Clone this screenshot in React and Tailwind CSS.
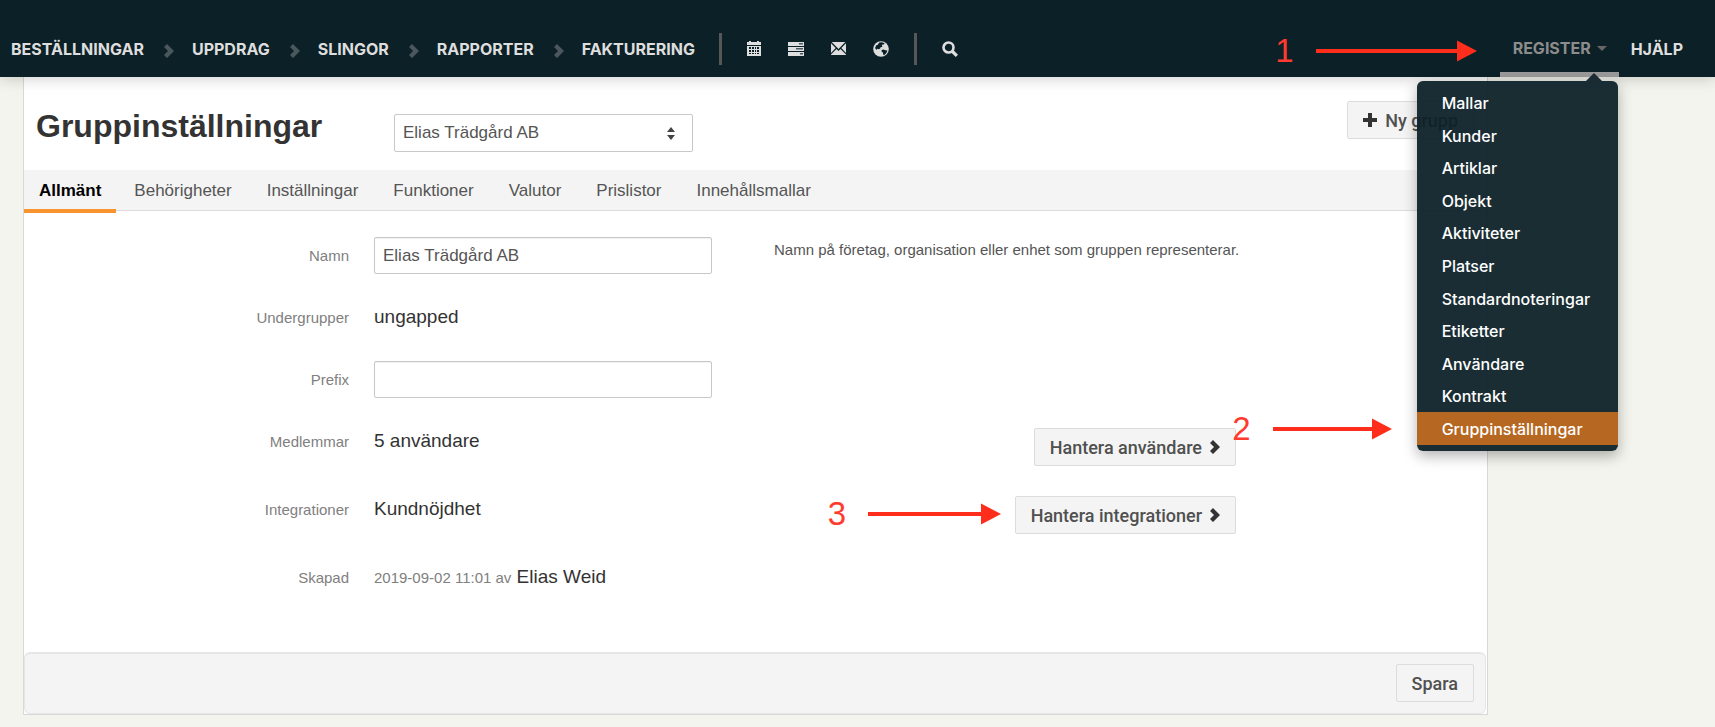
import { Fragment, useState } from 'react';

const NAV_ITEMS = ['BESTÄLLNINGAR', 'UPPDRAG', 'SLINGOR', 'RAPPORTER', 'FAKTURERING'];

const REGISTER_ITEMS = [
  'Mallar',
  'Kunder',
  'Artiklar',
  'Objekt',
  'Aktiviteter',
  'Platser',
  'Standardnoteringar',
  'Etiketter',
  'Användare',
  'Kontrakt',
  'Gruppinställningar',
];

const TABS = ['Allmänt', 'Behörigheter', 'Inställningar', 'Funktioner', 'Valutor', 'Prislistor', 'Innehållsmallar'];

function ChevronIcon({ className }) {
  return (
    <svg viewBox="0 0 10 14" className={className} fill="currentColor" aria-hidden="true">
      <path d="M0 3 3 0l7 7-7 7-3-3 4-4z" />
    </svg>
  );
}

function PlusIcon() {
  return (
    <svg viewBox="0 0 14 14" className="size-[14px]" fill="#333" aria-hidden="true">
      <path d="M5 0h4v5h5v4H9v5H5V9H0V5h5z" />
    </svg>
  );
}

function CalendarIcon() {
  return (
    <svg viewBox="0 0 14 15" className="h-[15px] w-[14px]" fill="currentColor" aria-hidden="true">
      <path d="M0 1h2V0h2v1h6V0h2v1h2v3H0z" />
      <path
        fillRule="evenodd"
        d="M0 5h14v10H0zM2 6v2h2V6zm3 0v2h2V6zm3 0v2h1V6zm2 0v2h2V6zM2 9v2h2V9zm3 0v2h2V9zm3 0v2h1V9zm2 0v2h2V9zM2 12v1h2v-1zm3 0v1h2v-1zm3 0v1h1v-1zm2 0v1h2v-1z"
      />
    </svg>
  );
}

function TasksIcon() {
  return (
    <svg viewBox="0 0 16 14" className="h-[14px] w-[16px]" aria-hidden="true">
      <g fill="currentColor">
        <rect width="16" height="4" />
        <rect y="5" width="16" height="4" />
        <rect y="10" width="16" height="4" />
      </g>
      <g fill="#4b5a60">
        <rect x="11" y="1" width="4" height="1.5" />
        <rect x="8" y="6" width="7" height="1.5" />
        <rect x="12" y="11" width="3" height="1.5" />
      </g>
    </svg>
  );
}

function EnvelopeIcon() {
  return (
    <svg viewBox="0 0 15 13" className="h-[13px] w-[15px]" fill="currentColor" aria-hidden="true">
      <path d="M.7 0h13.6L7.5 7zM0 1.2 4.7 6 0 11zM15 1.2 10.3 6 15 11zM5.5 6.9l2 2 2-2L15 12.4v.6H0v-.6z" />
    </svg>
  );
}

function GlobeIcon() {
  return (
    <svg viewBox="0 0 16 16" className="size-[16px]" aria-hidden="true">
      <circle cx="8" cy="8" r="7.8" fill="currentColor" />
      <path
        fill="#0c2027"
        d="M6.2 1.6 9 1.2l2.6 1-.6 1.2-1.6.2-.6 1.2.8 1-2 .4-.4 1.4-1.6.6-1.4-.4-1 1.2-1-2 .8-2.4 1.8-.8zM8.6 9l2-.6 1.8.8 2 .2-1 2.6-2 2-1.2-.2-.2-2-1.4-1.2z"
      />
    </svg>
  );
}

function SearchIcon() {
  return (
    <svg viewBox="0 0 16 16" className="size-[16px]" fill="none" stroke="currentColor" aria-hidden="true">
      <circle cx="6.5" cy="6.5" r="5" strokeWidth="2.6" />
      <path d="m10.5 10.5 4.4 4.4" strokeWidth="3.2" />
    </svg>
  );
}

// Röd siffra med pil som visar i vilken ordning man klickar.
function Step({ number, length, className }) {
  return (
    <div className={`pointer-events-none absolute flex items-center gap-[22px] text-[#ff3b30] ${className}`}>
      <span className="font-['Liberation_Sans',sans-serif] text-[33px] leading-9 font-normal">{number}</span>
      <svg width={length} height="22" viewBox={`0 0 ${length} 22`} fill="#ff2d1c" aria-hidden="true">
        <path d={`M0 9H${length - 20}V0.5L${length} 11L${length - 20} 21.5V13H0z`} />
      </svg>
    </div>
  );
}

function Button({ children, className = '' }) {
  return (
    <button
      type="button"
      className={`flex h-[38px] items-center gap-2 rounded-xs border border-[#dcdcdc] bg-[#f4f4f4] px-[15px] font-[Roboto,sans-serif] text-[18px] font-medium whitespace-nowrap text-[#505050] ${className}`}
    >
      {children}
    </button>
  );
}

function Row({ label, htmlFor, children, aside }) {
  const labelClass = 'text-right text-[15px] leading-[37px] text-[#808080]';
  return (
    <div className="grid grid-cols-[minmax(0,325fr)_minmax(0,375fr)_minmax(0,462fr)_minmax(0,226fr)] gap-x-[25px]">
      {htmlFor ? (
        <label htmlFor={htmlFor} className={labelClass}>
          {label}
        </label>
      ) : (
        <div className={labelClass}>{label}</div>
      )}
      <div className="text-[19px] leading-[36px] text-[#333]">{children}</div>
      <div>{aside}</div>
    </div>
  );
}

const inputClass =
  'block h-[37px] w-[90%] rounded-xs border border-[#c8c8c8] bg-white px-2 text-[17px] text-[#555] shadow-[inset_0_1px_1px_rgba(0,0,0,0.06)]';

function TopBar() {
  return (
    <header className="relative z-10 flex h-[77px] bg-[#0c2027] font-[Inter,sans-serif] text-[16px] font-bold text-[#dedede] shadow-[0_2px_14px_rgba(0,0,0,0.18)]">
      <nav className="flex items-center pt-5 pl-[11px]">
        {NAV_ITEMS.map((item, i) => (
          <Fragment key={item}>
            {i > 0 && <ChevronIcon className="mt-1 mr-[18px] ml-5 h-[14px] w-[10px] text-[#4a575d]" />}
            <a href="#">{item}</a>
          </Fragment>
        ))}
        <span className="ml-6 h-8 w-[3px] bg-[#575757]" />
        <div className="mx-[25px] flex items-center gap-[27px]">
          <a href="#" aria-label="Kalender"><CalendarIcon /></a>
          <a href="#" aria-label="Uppgifter"><TasksIcon /></a>
          <a href="#" aria-label="Meddelanden"><EnvelopeIcon /></a>
          <a href="#" aria-label="Karta"><GlobeIcon /></a>
        </div>
        <span className="h-8 w-[3px] bg-[#575757]" />
        <a href="#" aria-label="Sök" className="ml-[25px]"><SearchIcon /></a>
      </nav>

      <div className="ml-auto flex pr-8">
        <div className="relative flex w-[119px] items-center justify-between border-b-[5px] border-[#999] pt-[24px] pr-3 pl-[13px] text-[#8c8c8c]">
          <a href="#">REGISTER</a>
          <svg viewBox="0 0 10 5" className="h-[5px] w-[10px]" fill="#666" aria-hidden="true">
            <path d="M0 0h10L5 5z" />
          </svg>
          <Step number="1" length={161} className="top-[33px] right-[142px]" />
          <RegisterMenu />
        </div>
        <a href="#" className="flex items-center pt-5 pl-3">HJÄLP</a>
      </div>
    </header>
  );
}

function RegisterMenu() {
  return (
    <div className="absolute top-[81px] right-px w-[201px]">
      <svg viewBox="0 0 16 8" className="absolute -top-2 right-4 h-2 w-4" fill="#1a2b33" aria-hidden="true">
        <path d="M8 0l8 8H0z" />
      </svg>
      <ul className="flex h-[370px] flex-col rounded-md bg-[#0c2027]/94 py-1.5 text-[16px] font-medium text-white shadow-[0_5px_14px_rgba(0,0,0,0.3)]">
        {REGISTER_ITEMS.map((item) => (
          <li key={item} className="flex flex-1">
            <a
              href="#"
              className={`flex flex-1 items-center pl-[25px] ${item === 'Gruppinställningar' ? 'bg-[#b66822]' : ''}`}
            >
              {item}
            </a>
          </li>
        ))}
      </ul>
      <Step number="2" length={119} className="top-[330px] right-[226px]" />
    </div>
  );
}

export default function App() {
  const [name, setName] = useState('Elias Trädgård AB');
  const [prefix, setPrefix] = useState('');

  return (
    <div className="min-h-screen bg-[#f4f4ee] font-['Liberation_Sans',Arial,sans-serif]">
      <TopBar />

      <main className="mr-[227px] ml-[23px] border-x border-b border-[#d8d8d8] bg-white">
        <div className="flex items-start pr-[13px] pl-3">
          <h1 className="w-[358px] pt-[29px] text-[32px] leading-[40px] font-bold text-[#333]">Gruppinställningar</h1>
          <div className="relative mt-[37px] mb-[18px] w-[299px]">
            <select
              aria-label="Grupp"
              className="block h-[38px] w-full appearance-none rounded-xs border border-[#c8c8c8] bg-white px-2 text-[17px] text-[#555]"
            >
              <option>Elias Trädgård AB</option>
            </select>
            <svg
              viewBox="0 0 8 13"
              className="pointer-events-none absolute top-[13px] right-[18px] h-[13px] w-2"
              fill="#444"
              aria-hidden="true"
            >
              <path d="M4 0l4 5H0zM4 13l4-5H0z" />
            </svg>
          </div>
          <Button className="mt-6 ml-auto">
            <PlusIcon />
            Ny grupp
          </Button>
        </div>

        <nav className="flex h-[41px] gap-px border-b border-[#dcdcdc] bg-[#f4f4f4] text-[17px] text-[#555]">
          {TABS.map((tab, i) => (
            <a
              key={tab}
              href="#"
              className={
                i === 0
                  ? 'h-[43px] border-b-4 border-[#f7942f] px-[15px] leading-[41px] font-bold text-black'
                  : 'px-[17px] leading-[41px]'
              }
            >
              {tab}
            </a>
          ))}
        </nav>

        <form className="flex flex-col gap-[25px] pt-[26px] pb-14">
          <Row
            label="Namn"
            htmlFor="namn"
            aside={
              <p className="pt-[3px] text-[15px] leading-5 whitespace-nowrap text-[#555]">
                Namn på företag, organisation eller enhet som gruppen representerar.
              </p>
            }
          >
            <input id="namn" className={inputClass} value={name} onChange={(e) => setName(e.target.value)} />
          </Row>
          <Row label="Undergrupper">ungapped</Row>
          <Row label="Prefix" htmlFor="prefix">
            <input id="prefix" className={inputClass} value={prefix} onChange={(e) => setPrefix(e.target.value)} />
          </Row>
          <Row
            label="Medlemmar"
            aside={
              <div className="flex justify-end pt-[5px]">
                <Button>
                  Hantera användare
                  <ChevronIcon className="h-[14px] w-[10px] text-[#333]" />
                </Button>
              </div>
            }
          >
            5 användare
          </Row>
          <Row
            label="Integrationer"
            aside={
              <div className="flex justify-end pt-[5px]">
                <div className="relative">
                  <Button>
                    Hantera integrationer
                    <ChevronIcon className="h-[14px] w-[10px] text-[#333]" />
                  </Button>
                  <Step number="3" length={133} className="top-0 right-[235px]" />
                </div>
              </div>
            }
          >
            Kundnöjdhet
          </Row>
          <Row label="Skapad">
            <span className="text-[15px] text-[#808080]">2019-09-02 11:01 av</span> Elias Weid
          </Row>
        </form>

        <footer className="mr-px flex justify-end rounded-md border border-t-2 border-[#e6e6e6] bg-[#f4f4f4] pt-2.5 pr-[11px] pb-[11px]">
          <Button>Spara</Button>
        </footer>
      </main>
    </div>
  );
}
